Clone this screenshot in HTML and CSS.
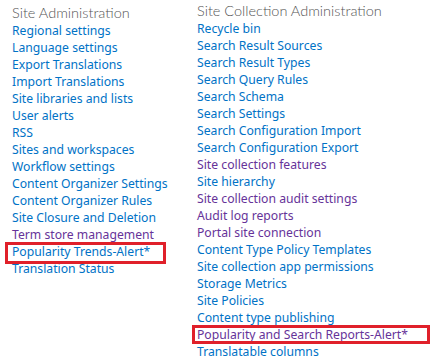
FILE: index.html
```html
<!DOCTYPE html>
<html>
<head>
  <title>Site Settings</title>
  <link rel="stylesheet" href="styles.css">
</head>
<body>
  <div class="settings">
    <div class="section section-site">
      <h3 class="section-title">Site Administration</h3>
      <ul class="links">
        <li><a href="#">Regional settings</a></li>
        <li><a href="#">Language settings</a></li>
        <li><a href="#">Export Translations</a></li>
        <li><a href="#">Import Translations</a></li>
        <li><a href="#">Site libraries and lists</a></li>
        <li><a href="#">User alerts</a></li>
        <li><a href="#">RSS</a></li>
        <li><a href="#">Sites and workspaces</a></li>
        <li><a href="#">Workflow settings</a></li>
        <li><a href="#">Content Organizer Settings</a></li>
        <li><a href="#">Content Organizer Rules</a></li>
        <li><a href="#">Site Closure and Deletion</a></li>
        <li><a href="#" class="visited">Term store management</a></li>
        <li class="marked marked-left"><a href="#">Popularity Trends-Alert*</a></li>
        <li><a href="#">Translation Status</a></li>
      </ul>
    </div>

    <div class="section section-collection">
      <h3 class="section-title">Site Collection Administration</h3>
      <ul class="links">
        <li><a href="#">Recycle bin</a></li>
        <li><a href="#">Search Result Sources</a></li>
        <li><a href="#">Search Result Types</a></li>
        <li><a href="#">Search Query Rules</a></li>
        <li><a href="#">Search Schema</a></li>
        <li><a href="#">Search Settings</a></li>
        <li><a href="#">Search Configuration Import</a></li>
        <li><a href="#">Search Configuration Export</a></li>
        <li><a href="#" class="visited">Site collection features</a></li>
        <li><a href="#">Site hierarchy</a></li>
        <li><a href="#" class="visited">Site collection audit settings</a></li>
        <li><a href="#" class="visited">Audit log reports</a></li>
        <li><a href="#" class="visited">Portal site connection</a></li>
        <li><a href="#">Content Type Policy Templates</a></li>
        <li><a href="#">Site collection app permissions</a></li>
        <li><a href="#">Storage Metrics</a></li>
        <li><a href="#">Site Policies</a></li>
        <li><a href="#">Content type publishing</a></li>
        <li class="marked marked-right"><a href="#" class="visited">Popularity and Search Reports-Alert*</a></li>
        <li><a href="#">Translatable columns</a></li>
      </ul>
    </div>
  </div>
</body>
</html>
```

FILE: styles.css
```css
body {
  margin: 0;
  padding: 0;
  background: #fff;
  font-family: "Noto Sans", "Open Sans", sans-serif;
}

.settings {
  display: flex;
  padding-left: 12px;
}

.section-site {
  width: 185px;
  padding-top: 4px;
}

.section-collection {
  padding-top: 2px;
}

.section-title {
  margin: 0;
  font-family: Lato, "Noto Sans", sans-serif;
  font-size: 14.5px;
  font-weight: 300;
  line-height: 18px;
  color: #555;
}

.links {
  list-style-type: none;
  margin: 0;
  padding: 0;
}

.links li {
  height: 17px;
  line-height: 17px;
  font-size: 12.2px;
  white-space: nowrap;
}

.links a {
  color: #0072c6;
  text-decoration: none;
}

.links a.visited {
  color: #663399;
}

/* red highlight boxes drawn over the items */
.marked {
  position: relative;
}

.marked::after {
  content: "";
  position: absolute;
  border: 3px solid #e0202a;
}

.marked-left::after {
  left: -7px;
  top: -1px;
  width: 155px;
  height: 16px;
}

.marked-right::after {
  left: -5px;
  top: -1px;
  width: 232px;
  height: 13px;
}
```
